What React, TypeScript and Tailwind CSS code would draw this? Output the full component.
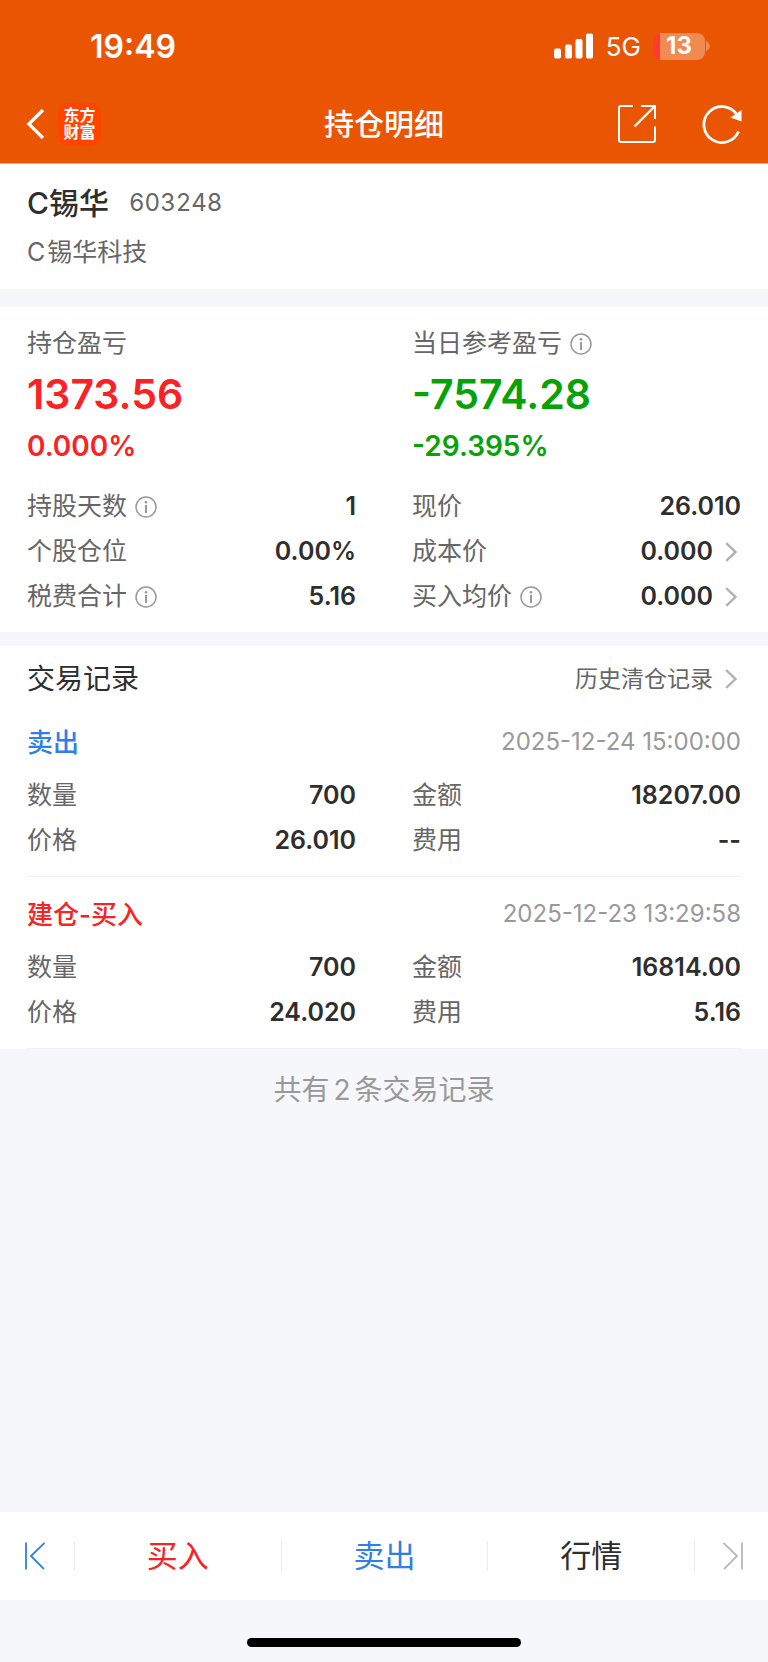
import type { ReactNode } from "react";

type Field = {
  label: string;
  value: string;
  info?: boolean;
  more?: boolean;
};

type TradeRecord = {
  type: string;
  color: string;
  time: string;
  fields: Field[];
};

const positionFields: Field[] = [
  { label: "持股天数", value: "1", info: true },
  { label: "现价", value: "26.010" },
  { label: "个股仓位", value: "0.00%" },
  { label: "成本价", value: "0.000", more: true },
  { label: "税费合计", value: "5.16", info: true },
  { label: "买入均价", value: "0.000", info: true, more: true },
];

const records: TradeRecord[] = [
  {
    type: "卖出",
    color: "text-[#2f7fe8]",
    time: "2025-12-24 15:00:00",
    fields: [
      { label: "数量", value: "700" },
      { label: "金额", value: "18207.00" },
      { label: "价格", value: "26.010" },
      { label: "费用", value: "--" },
    ],
  },
  {
    type: "建仓-买入",
    color: "text-[#fa2222]",
    time: "2025-12-23 13:29:58",
    fields: [
      { label: "数量", value: "700" },
      { label: "金额", value: "16814.00" },
      { label: "价格", value: "24.020" },
      { label: "费用", value: "5.16" },
    ],
  },
];

function InfoButton({ label }: { label: string }) {
  return (
    <button type="button" aria-label={`${label}说明`} className="ml-2 shrink-0">
      <svg width="24" height="24" viewBox="0 0 24 24" fill="none" className="text-[#999]">
        <circle cx="11" cy="12" r="10" stroke="currentColor" strokeWidth="1.5" />
        <circle cx="11" cy="7.2" r="1.3" fill="currentColor" />
        <path d="M11 10v8" stroke="currentColor" strokeWidth="2" />
      </svg>
    </button>
  );
}

function Chevron() {
  return (
    <svg width="12" height="20" viewBox="0 0 12 20" fill="none" className="mr-1 ml-3 shrink-0">
      <path d="M1.2 1.2 10.4 10 1.2 18.8" stroke="#b2b2b2" strokeWidth="2.4" />
    </svg>
  );
}

function FieldGrid({ fields }: { fields: Field[] }) {
  return (
    <dl className="grid grid-cols-2 gap-x-14">
      {fields.map((field) => (
        <div key={field.label} className="flex h-[45px] items-center justify-between">
          <dt className="flex items-center text-[25px] text-[#666]">
            {field.label}
            {field.info && <InfoButton label={field.label} />}
          </dt>
          <dd className="flex items-center text-[25px] font-semibold text-[#2e2e2e]">
            {field.value}
            {field.more && <Chevron />}
          </dd>
        </div>
      ))}
    </dl>
  );
}

function StatusBar() {
  return (
    <div className="flex h-[92px] items-center justify-between pr-[58px] pl-[90px]">
      <span className="pt-0.5 text-[32px] font-semibold">19:49</span>
      <div className="flex items-center">
        <svg width="40" height="26" viewBox="0 0 40 26" fill="currentColor">
          <rect x="0" y="15.5" width="7" height="10" rx="1.8" />
          <rect x="11" y="11.5" width="7" height="14" rx="1.8" />
          <rect x="21.5" y="6" width="7" height="19.5" rx="1.8" />
          <rect x="32" y="0.5" width="7" height="25" rx="1.8" />
        </svg>
        <span className="ml-3 text-[26px]">5G</span>
        <div className="ml-3 flex h-[27px] w-[52px] items-center justify-center overflow-hidden rounded-lg bg-linear-to-r from-[#ff3b30] from-[7px] to-[#f28b51] to-[7px] text-2xl font-bold">
          13
        </div>
        <svg width="4" height="10" viewBox="0 0 4 10" className="ml-px">
          <path d="M0 0c5 2 5 8 0 10z" fill="#f28b51" />
        </svg>
      </div>
    </div>
  );
}

function Header() {
  return (
    <header className="border-b border-[#f6a983] bg-[#ea5504] pb-[7px] text-white">
      <StatusBar />
      <div className="grid h-16 grid-cols-[1fr_auto_1fr] items-center px-[26px]">
        <div className="flex items-center">
          <button type="button" aria-label="返回">
            <svg width="20" height="32" viewBox="0 0 20 32" fill="none">
              <path d="M17 2 2.800 16l14.200 14" stroke="currentColor" strokeWidth="3.2" />
            </svg>
          </button>
          <div className="ml-3 flex size-[43px] flex-col items-center justify-center rounded-[10px] bg-[#ff4400] text-base leading-[17px] font-bold">
            <span>东方</span>
            <span>财富</span>
          </div>
        </div>
        <h1 className="text-[30px] font-medium">持仓明细</h1>
        <div className="flex items-center justify-end gap-[45px]">
          <button type="button" aria-label="分享">
            <svg width="40" height="40" viewBox="0 0 40 40" fill="none" stroke="currentColor" strokeWidth="2">
              <path d="M16 2H4a2 2 0 0 0-2 2v32a2 2 0 0 0 2 2h32a2 2 0 0 0 2-2V22.5" />
              <path d="M24 2h14v13" />
              <path d="M38 2 17.5 22.5" strokeWidth="2.4" />
            </svg>
          </button>
          <button type="button" aria-label="刷新">
            <svg width="40" height="40" viewBox="0 0 40 40" fill="none">
              <path d="M36.5 27.500A18 18 0 1 1 34.500 10" stroke="currentColor" strokeWidth="2.8" />
              <path d="M39.5 6v11.500L28.500 13.500z" fill="currentColor" />
            </svg>
          </button>
        </div>
      </div>
    </header>
  );
}

type ProfitProps = {
  label: string;
  amount: string;
  percent: string;
  color: string;
  info?: boolean;
};

function Profit({ label, amount, percent, color, info }: ProfitProps) {
  return (
    <div>
      <h2 className="flex h-10 items-center text-[25px] text-[#666]">
        {label}
        {info && <InfoButton label={label} />}
      </h2>
      <div className={color}>
        <p className="text-[41px] leading-[60px] font-semibold">{amount}</p>
        <p className="text-[28px] leading-[44px] font-semibold">{percent}</p>
      </div>
    </div>
  );
}

function TabLink({ className, children }: { className: string; children: ReactNode }) {
  return (
    <a
      href="#"
      className={`flex h-[30px] flex-1 items-center justify-center border-r border-[#ececec] text-[31px] ${className}`}
    >
      {children}
    </a>
  );
}

export default function App() {
  return (
    <div className="flex min-h-screen flex-col bg-[#f6f7fa] font-['Inter','Noto_Sans_CJK_SC',sans-serif]">
      <Header />

      <main>
        <section className="bg-white px-[27px] pt-4 pb-3">
          <div className="flex items-center leading-[46px]">
            <span className="text-[30px] font-medium text-[#2e2e2e]">C锡华</span>
            <span className="ml-5 text-2xl text-[#666] tabular-nums">603248</span>
          </div>
          <p className="pt-px text-[25px] leading-[50px] text-[#666]">
            <span className="mr-0.5">C</span>锡华科技
          </p>
        </section>

        <section className="mt-[18px] bg-white px-[27px] pt-[17px] pb-[13px]">
          <div className="mb-4 grid grid-cols-2 gap-x-14">
            <Profit label="持仓盈亏" amount="1373.56" percent="0.000%" color="text-[#fa2222]" />
            <Profit label="当日参考盈亏" amount="-7574.28" percent="-29.395%" color="text-[#07a207]" info />
          </div>
          <FieldGrid fields={positionFields} />
        </section>

        <section className="mt-[14px] bg-white">
          <div className="flex h-[66px] items-center justify-between px-[27px]">
            <h2 className="text-[28px] text-[#2e2e2e]">交易记录</h2>
            <a href="#" className="flex items-center text-[23px] text-[#666]">
              历史清仓记录
              <Chevron />
            </a>
          </div>
          <ul className="px-[27px]">
            {records.map((record) => (
              <li key={record.time} className="border-b border-[#f0f0f2] pt-[7px] pb-[13px] first:pt-0">
                <div className="mb-px flex h-[60px] items-center justify-between">
                  <h3 className={`text-[26px] font-medium ${record.color}`}>{record.type}</h3>
                  <time className="text-2xl text-[#999]">{record.time}</time>
                </div>
                <FieldGrid fields={record.fields} />
              </li>
            ))}
          </ul>
        </section>

        <p className="text-center text-[28px] leading-[82px] text-[#999]">
          共有<span className="mx-1">2</span>条交易记录
        </p>
      </main>

      <footer className="mt-auto">
        <nav className="flex h-[88px] items-center bg-white">
          <button
            type="button"
            aria-label="上一只"
            className="flex h-[30px] w-[75px] items-center border-r border-[#ececec] pl-6 text-[#2f7fe8]"
          >
            <svg width="22" height="28" viewBox="0 0 22 28" fill="none" stroke="currentColor" strokeWidth="1.8">
              <path d="M2 .5v27M20.500.8 7 14l13 13.200" />
            </svg>
          </button>
          <TabLink className="text-[#fa2222]">买入</TabLink>
          <TabLink className="text-[#2f7fe8]">卖出</TabLink>
          <TabLink className="text-[#2e2e2e]">行情</TabLink>
          <button
            type="button"
            aria-label="下一只"
            className="flex h-[30px] w-[73px] items-center justify-end pr-6 text-[#b8b8b8]"
          >
            <svg width="22" height="28" viewBox="0 0 22 28" fill="none" stroke="currentColor" strokeWidth="1.8">
              <path d="M20 .5v27M1.500.8 15 14 2 27.200" />
            </svg>
          </button>
        </nav>
        <div className="flex h-[62px] items-end justify-center pb-[15px]">
          <div className="h-[9px] w-[274px] rounded-full bg-black" />
        </div>
      </footer>
    </div>
  );
}
